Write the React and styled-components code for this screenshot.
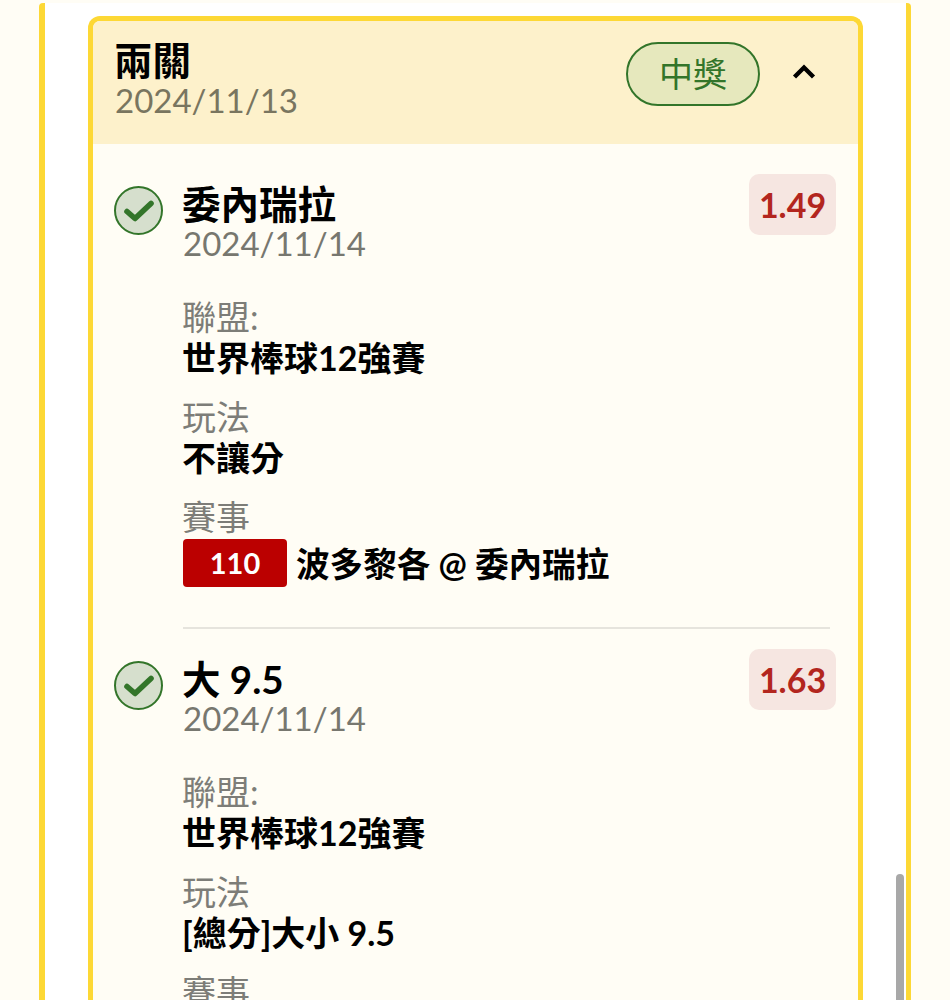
import React from 'react'
import styled, { createGlobalStyle } from 'styled-components'

const GlobalStyle = createGlobalStyle`
  html, body {
    margin: 0;
    padding: 0;
    height: 1000px;
    overflow: hidden;
    background: #fffdf5;
    font-family: Lato, "Noto Sans CJK TC", sans-serif;
  }
`

const legs = [
  {
    title: '委內瑞拉',
    date: '2024/11/14',
    odds: '1.49',
    league: '世界棒球12強賽',
    play: '不讓分',
    code: '110',
    match: '波多黎各 @ 委內瑞拉',
  },
  {
    title: '大 9.5',
    date: '2024/11/14',
    odds: '1.63',
    league: '世界棒球12強賽',
    play: '[總分]大小 9.5',
    code: '',
    match: '',
  },
]

export default function App() {
  return (
    <>
      <GlobalStyle />
      <Page>
        <Frame>
          <Card>
            <CardHeader>
              <div>
                <CardTitle>兩關</CardTitle>
                <CardDate>2024/11/13</CardDate>
              </div>
              <HeaderRight>
                <WinPill>中獎</WinPill>
                <Chevron viewBox="0 0 24 16">
                  <path d="M2.5 14 L12 4.5 L21.5 14" fill="none" stroke="#000" strokeWidth="4.4" />
                </Chevron>
              </HeaderRight>
            </CardHeader>
            <CardBody>
              {legs.map((leg) => (
                <Leg key={leg.title}>
                  <CheckCircle>
                    <svg width="32" height="24" viewBox="0 0 32 24">
                      <path
                        d="M4 12.5 L12 19.5 L28 4.5"
                        fill="none"
                        stroke="#33752a"
                        strokeWidth="5.6"
                        strokeLinecap="round"
                        strokeLinejoin="round"
                      />
                    </svg>
                  </CheckCircle>
                  <LegMain>
                    <LegTop>
                      <div>
                        <LegTitle>{leg.title}</LegTitle>
                        <LegDate>{leg.date}</LegDate>
                      </div>
                      <Odds>{leg.odds}</Odds>
                    </LegTop>
                    <Field>
                      <FieldLabel>聯盟:</FieldLabel>
                      <FieldValue>{leg.league}</FieldValue>
                    </Field>
                    <Field>
                      <FieldLabel>玩法</FieldLabel>
                      <FieldValue>{leg.play}</FieldValue>
                    </Field>
                    <Field>
                      <FieldLabel>賽事</FieldLabel>
                      {leg.code && (
                        <MatchRow>
                          <MatchCode>{leg.code}</MatchCode>
                          <MatchName>{leg.match}</MatchName>
                        </MatchRow>
                      )}
                    </Field>
                  </LegMain>
                </Leg>
              ))}
            </CardBody>
          </Card>
        </Frame>
        <ScrollThumb />
      </Page>
    </>
  )
}

const Page = styled.div`
  position: relative;
  height: 1000px;
  overflow: hidden;
  padding: 3px 39px 0 39px;
  box-sizing: border-box;
`

const Frame = styled.div`
  background: #fff;
  border-left: 6px solid #fdd835;
  border-right: 5px solid #fdd835;
  border-radius: 4px 4px 0 0;
  padding: 13px 43px 0 43px;
  height: 1100px;
  box-sizing: border-box;
`

const Card = styled.div`
  background: #fffdf5;
  border: 5px solid #fdd835;
  border-bottom: none;
  border-radius: 12px 12px 0 0;
  overflow: hidden;
`

const CardHeader = styled.div`
  display: flex;
  justify-content: space-between;
  align-items: flex-start;
  height: 123px;
  box-sizing: border-box;
  padding: 16px 42px 0 22px;
  background: #fdf1cb;
`

const CardTitle = styled.div`
  font-size: 38.5px;
  line-height: 46px;
  font-weight: 700;
  color: #000;
  margin-left: -1px;
`

const CardDate = styled.div`
  font-size: 33px;
  line-height: 34px;
  color: #79755f;
`

const HeaderRight = styled.div`
  display: flex;
  align-items: center;
  gap: 32px;
  padding-top: 5px;
`

const WinPill = styled.div`
  width: 134px;
  height: 64px;
  box-sizing: border-box;
  display: flex;
  align-items: center;
  justify-content: center;
  border: 2px solid #33752a;
  border-radius: 32px;
  background: #e6e8bd;
  color: #33752a;
  font-size: 34px;
  line-height: 58px;
`

const Chevron = styled.svg`
  width: 24px;
  height: 16px;
  margin-top: -7px;
`

const CardBody = styled.div`
  padding: 30px 22px 0 21px;
`

const Leg = styled.div`
  display: flex;
  gap: 20px;
  margin-bottom: 20px;
`

const CheckCircle = styled.div`
  flex: none;
  width: 49px;
  height: 49px;
  margin-top: 12px;
  box-sizing: border-box;
  display: flex;
  align-items: center;
  justify-content: center;
  border: 2.5px solid #33752a;
  border-radius: 50%;
  background: #d6dfcd;
`

const LegMain = styled.div`
  flex: 1;
  padding-bottom: 22px;
  border-bottom: 2px solid #e6e4dd;
  margin-right: 6px;
`

const LegTop = styled.div`
  display: flex;
  justify-content: space-between;
  align-items: flex-start;
  margin-right: -6px;
  margin-bottom: 37px;
`

const LegTitle = styled.div`
  font-size: 38.5px;
  line-height: 46px;
  font-weight: 700;
  color: #000;
  margin: 7px 0 0 -1px;
`

const LegDate = styled.div`
  font-size: 33px;
  line-height: 33px;
  color: #77776f;
`

const Odds = styled.div`
  width: 87px;
  height: 61px;
  display: flex;
  align-items: center;
  justify-content: center;
  border-radius: 10px;
  background: #f6e6e1;
  color: #b3261e;
  font-size: 34px;
  font-weight: 700;
`

const Field = styled.div`
  margin-bottom: 18px;
`

const FieldLabel = styled.div`
  font-size: 34px;
  line-height: 40px;
  color: #7d7d78;
  margin-left: -1px;
`

const FieldValue = styled.div`
  font-size: 34px;
  line-height: 42px;
  font-weight: 700;
  color: #000;
  margin-left: -1px;
`

const MatchRow = styled.div`
  display: flex;
  align-items: center;
  gap: 9px;
  margin-top: 1px;
`

const MatchCode = styled.div`
  width: 104px;
  height: 48px;
  display: flex;
  align-items: center;
  justify-content: center;
  border-radius: 4px;
  background: #bb0000;
  color: #fff;
  font-size: 29px;
  font-weight: 700;
`

const MatchName = styled.div`
  font-size: 33.6px;
  font-weight: 700;
  color: #000;
`

const ScrollThumb = styled.div`
  position: absolute;
  left: 896px;
  top: 874px;
  width: 8px;
  height: 140px;
  border-radius: 4px;
  background: #a8a8a8;
`
